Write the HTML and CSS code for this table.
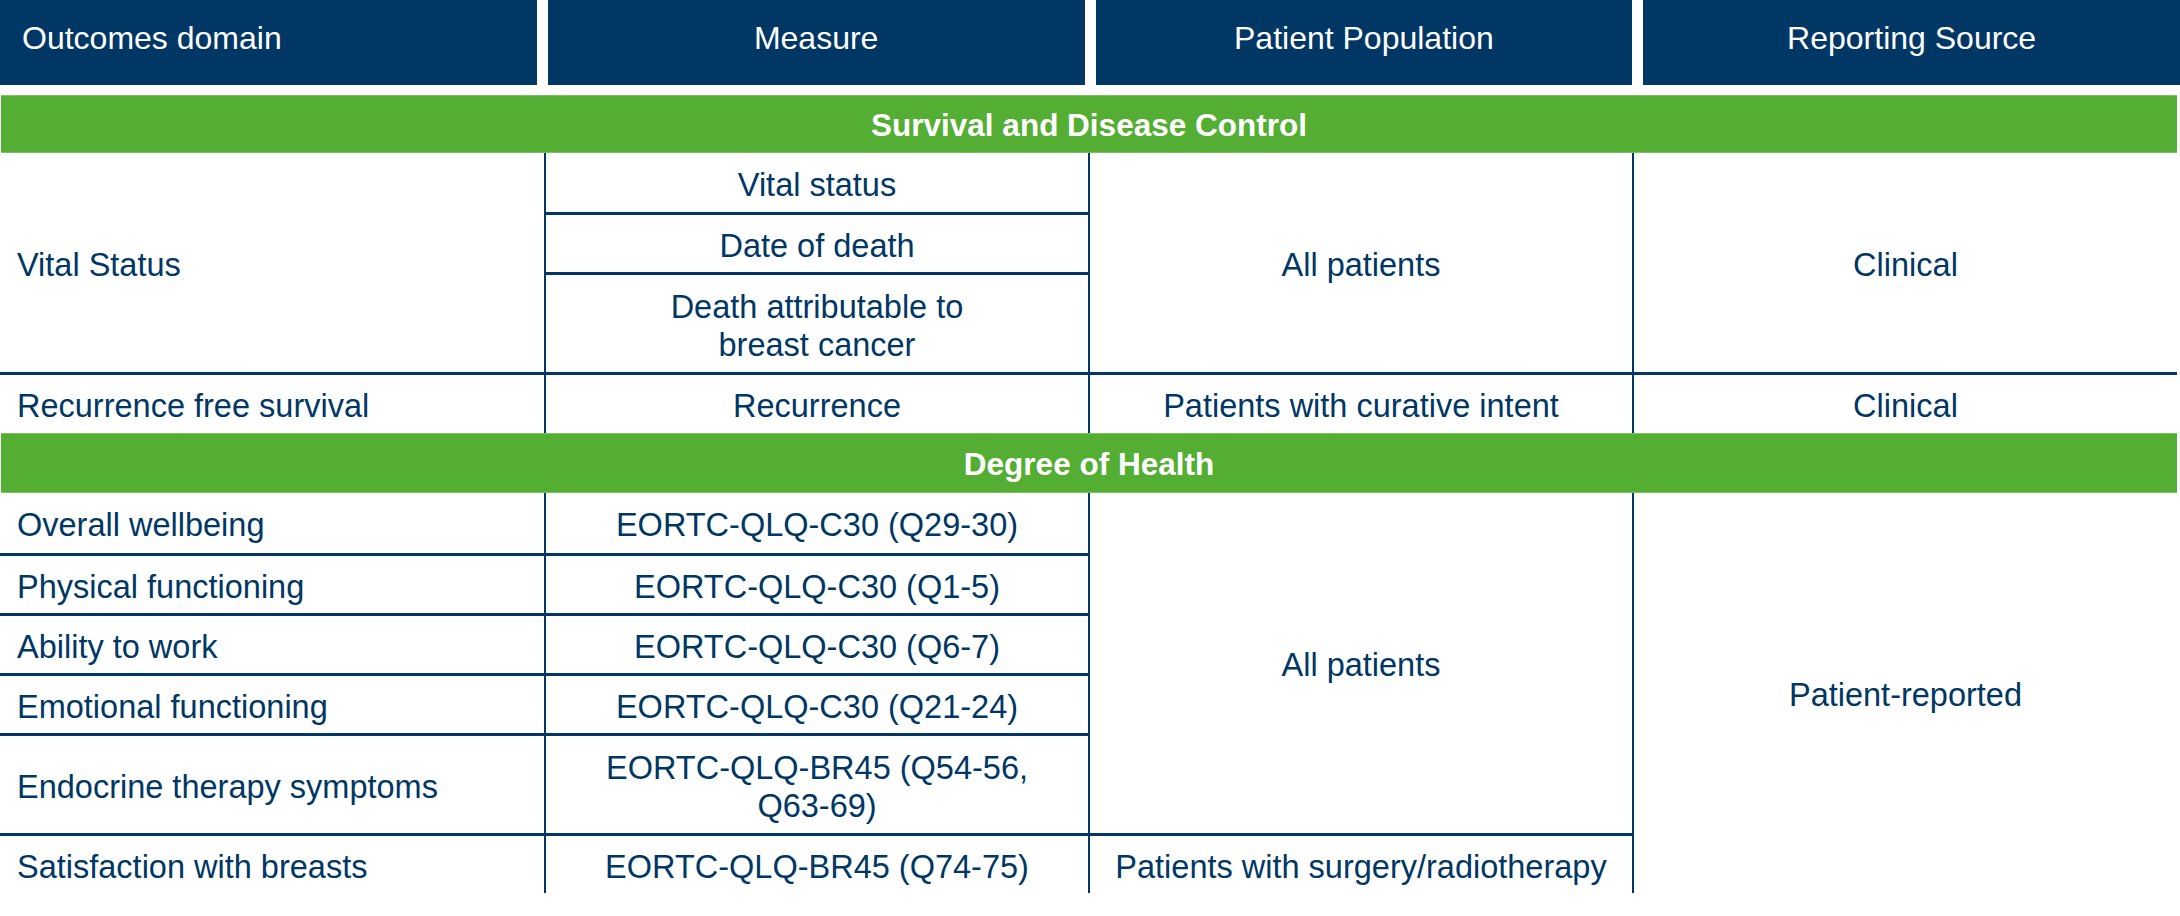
FILE: index.html
```html
<!DOCTYPE html>
<html lang="en">
<head>
<meta charset="utf-8">
<title>Outcomes</title>
<link rel="stylesheet" href="styles.css">
</head>
<body>
<div class="page">
  <div class="head">
    <div class="hcell left">Outcomes domain</div>
    <div class="hcell">Measure</div>
    <div class="hcell">Patient Population</div>
    <div class="hcell">Reporting Source</div>
  </div>
  <div class="grid">
    <div class="cell sec">Survival and Disease Control</div>

    <div class="cell dom span3">Vital Status</div>
    <div class="cell bl">Vital status</div>
    <div class="cell bl span3">All patients</div>
    <div class="cell bl span3">Clinical</div>
    <div class="cell bl bt">Date of death</div>
    <div class="cell bl bt">Death attributable to<br>breast cancer</div>

    <div class="cell dom bt">Recurrence free survival</div>
    <div class="cell bl bt">Recurrence</div>
    <div class="cell bl bt">Patients with curative intent</div>
    <div class="cell bl bt">Clinical</div>

    <div class="cell sec">Degree of Health</div>

    <div class="cell dom">Overall wellbeing</div>
    <div class="cell bl">EORTC-QLQ-C30 (Q29-30)</div>
    <div class="cell bl span5">All patients</div>
    <div class="cell bl span6">Patient-reported</div>

    <div class="cell dom bt">Physical functioning</div>
    <div class="cell bl bt">EORTC-QLQ-C30 (Q1-5)</div>

    <div class="cell dom bt">Ability to work</div>
    <div class="cell bl bt">EORTC-QLQ-C30 (Q6-7)</div>

    <div class="cell dom bt">Emotional functioning</div>
    <div class="cell bl bt">EORTC-QLQ-C30 (Q21-24)</div>

    <div class="cell dom bt">Endocrine therapy symptoms</div>
    <div class="cell bl bt">EORTC-QLQ-BR45 (Q54-56,<br>Q63-69)</div>

    <div class="cell dom bt">Satisfaction with breasts</div>
    <div class="cell bl bt">EORTC-QLQ-BR45 (Q74-75)</div>
    <div class="cell bl bt">Patients with surgery/radiotherapy</div>
  </div>
</div>
</body>
</html>
```

FILE: styles.css
```css
html, body {
  margin: 0;
  padding: 0;
  background: #ffffff;
}

body {
  font-family: "Liberation Sans", Arial, sans-serif;
}

.page {
  width: 2180px;
}

.head {
  display: grid;
  grid-template-columns: repeat(4, 1fr);
  column-gap: 11px;
  height: 85px;
  margin-bottom: 10px;
}

.hcell {
  background: #003764;
  color: #ffffff;
  font-size: 32px;
  line-height: 37px;
  display: flex;
  align-items: center;
  justify-content: center;
  padding-bottom: 9px;
  box-sizing: border-box;
}

.hcell.left {
  justify-content: flex-start;
  padding-left: 22px;
}

.grid {
  display: grid;
  width: 2177px;
  grid-template-columns: 544px 544px 544px 545px;
  grid-template-rows: 58px 59px 60px 100px 61px 60px 60px 60px 60px 60px 100px 60px;
}

.cell {
  display: flex;
  align-items: center;
  justify-content: center;
  text-align: center;
  color: #003764;
  font-size: 32.5px;
  line-height: 38px;
  padding-top: 4px;
  box-sizing: border-box;
}

.bl {
  border-left: 2px solid #003764;
}

.bt {
  border-top: 3px solid #003764;
}

.dom {
  justify-content: flex-start;
  text-align: left;
  padding-left: 17px;
}

.sec {
  grid-column: 1 / -1;
  background: #53ae33;
  color: #ffffff;
  font-size: 31.5px;
  font-weight: bold;
  padding-top: 2px;
  margin-left: 1px;
  box-shadow: inset 0 1px 0 #7cc061, inset 0 -1px 0 #7cc061;
}

.span3 {
  grid-row: span 3;
}

.span5 {
  grid-row: span 5;
}

.span6 {
  grid-row: span 6;
}
```
